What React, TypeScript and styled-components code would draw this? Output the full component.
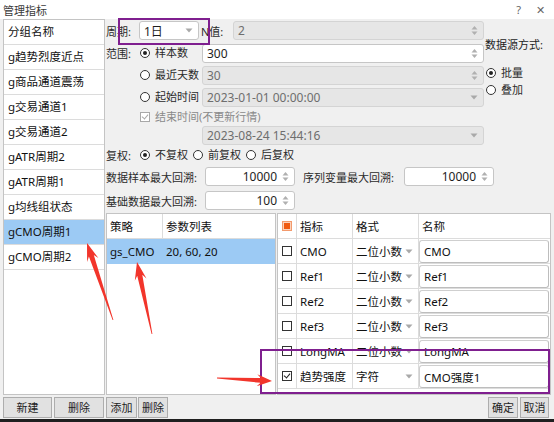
import styled, { createGlobalStyle } from 'styled-components'

const GlobalStyle = createGlobalStyle`
  html, body { margin: 0; padding: 0; background: #f0f0f0; }
  body {
    font-family: "Noto Sans", "Noto Sans CJK SC", sans-serif;
    font-size: 11px;
    color: #1e1e1e;
  }
  * { box-sizing: border-box; }
`

type Point = [number, number]

// long wedge arrow used for the red annotations
function arrowPoints(tail: Point, tip: Point, head = 16, barb = 6, shaft = 2.6): string {
  const dx = tip[0] - tail[0]
  const dy = tip[1] - tail[1]
  const len = Math.hypot(dx, dy)
  const ux = dx / len
  const uy = dy / len
  const nx = -uy
  const ny = ux
  const bx = tip[0] - ux * head * 0.75
  const by = tip[1] - uy * head * 0.75
  const hx = tip[0] - ux * head
  const hy = tip[1] - uy * head
  const pts: Point[] = [
    [tail[0] + nx * 0.4, tail[1] + ny * 0.4],
    [bx + nx * shaft, by + ny * shaft],
    [hx + nx * barb, hy + ny * barb],
    tip,
    [hx - nx * barb, hy - ny * barb],
    [bx - nx * shaft, by - ny * shaft],
    [tail[0] - nx * 0.4, tail[1] - ny * 0.4],
  ]
  return pts.map(p => `${p[0].toFixed(1)},${p[1].toFixed(1)}`).join(' ')
}

const groups = [
  'g趋势烈度近点',
  'g商品通道震荡',
  'g交易通道1',
  'g交易通道2',
  'gATR周期2',
  'gATR周期1',
  'g均线组状态',
  'gCMO周期1',
  'gCMO周期2',
]

type Indicator = { key: string; format: string; name: string; checked: boolean }

const indicators: Indicator[] = [
  { key: 'CMO', format: '二位小数', name: 'CMO', checked: false },
  { key: 'Ref1', format: '二位小数', name: 'Ref1', checked: false },
  { key: 'Ref2', format: '二位小数', name: 'Ref2', checked: false },
  { key: 'Ref3', format: '二位小数', name: 'Ref3', checked: false },
  { key: 'LongMA', format: '二位小数', name: 'LongMA', checked: false },
  { key: '趋势强度', format: '字符', name: 'CMO强度1', checked: true },
]

function DownArrow() {
  return (
    <svg width="8" height="5" viewBox="0 0 8 5">
      <path d="M0.5 0.5 L7.5 0.5 L4 4.5 Z" fill="#a9a9a9" />
    </svg>
  )
}

function SpinArrows() {
  return (
    <svg width="7" height="11" viewBox="0 0 7 11">
      <path d="M0.5 4.5 L6.5 4.5 L3.5 1 Z" fill="#b0b0b0" />
      <path d="M0.5 6.5 L6.5 6.5 L3.5 10 Z" fill="#b0b0b0" />
    </svg>
  )
}

export default function App() {
  return (
    <>
      <GlobalStyle />
      <Window>
        <TitleBar>
          <span>管理指标</span>
          <TitleButtons>
            <span>?</span>
            <span>✕</span>
          </TitleButtons>
        </TitleBar>

        <Body>
          <GroupList>
            <GroupItem>分组名称</GroupItem>
            {groups.map(g => (
              <GroupItem key={g} $selected={g === 'gCMO周期1'}>{g}</GroupItem>
            ))}
          </GroupList>

          <Form>
            <TopBlock>
              <Fields>
                <Row $h={23}>
                  <Label $w={33}>周期:</Label>
                  <Box $w={60}>
                    <span>1日</span>
                    <DownArrow />
                  </Box>
                  <Label $w={32} style={{ marginLeft: 2 }}>N值:</Label>
                  <Box $disabled $grow>
                    <span>2</span>
                    <SpinArrows />
                  </Box>
                </Row>
                <Row $h={22}>
                  <Label $w={33}>范围:</Label>
                  <Option $w={63}><Radio $checked />样本数</Option>
                  <Box $grow>
                    <span>300</span>
                    <SpinArrows />
                  </Box>
                </Row>
                <Row $h={22}>
                  <Label $w={33} />
                  <Option $w={63}><Radio />最近天数</Option>
                  <Box $disabled $grow>
                    <span>30</span>
                    <SpinArrows />
                  </Box>
                </Row>
                <Row $h={22}>
                  <Label $w={33} />
                  <Option $w={63}><Radio />起始时间</Option>
                  <Box $disabled $grow>
                    <span>2023-01-01 00:00:00</span>
                    <DownArrow />
                  </Box>
                </Row>
                <Row $h={17}>
                  <Label $w={33} />
                  <Option $w={200} $muted><Check $checked $muted />结束时间(不更新行情)</Option>
                </Row>
                <Row $h={20}>
                  <Label $w={96} />
                  <Box $disabled $grow>
                    <span>2023-08-24 15:44:16</span>
                    <DownArrow />
                  </Box>
                </Row>
              </Fields>
              <SourcePanel>
                <SourceTitle>数据源方式:</SourceTitle>
                <Option $w={60}><Radio $checked />批量</Option>
                <Option $w={60}><Radio />叠加</Option>
              </SourcePanel>
            </TopBlock>

            <Row $h={20}>
              <Label $w={33}>复权:</Label>
              <RadioGroup>
                <Option><Radio $checked />不复权</Option>
                <Option><Radio />前复权</Option>
                <Option><Radio />后复权</Option>
              </RadioGroup>
            </Row>
            <Row $h={23}>
              <Label $w={99}>数据样本最大回溯:</Label>
              <Box $w={90} $right>
                <span>10000</span>
                <SpinArrows />
              </Box>
              <Label $w={101} style={{ marginLeft: 8 }}>序列变量最大回溯:</Label>
              <Box $w={90} $right>
                <span>10000</span>
                <SpinArrows />
              </Box>
            </Row>
            <Row $h={25}>
              <Label $w={99}>基础数据最大回溯:</Label>
              <Box $w={90} $right>
                <span>100</span>
                <SpinArrows />
              </Box>
            </Row>
          </Form>

          <StrategyTable>
            <StrategyRow>
              <Cell>策略</Cell>
              <Cell $last>参数列表</Cell>
            </StrategyRow>
            <StrategyRow $selected>
              <Cell $plain>gs_CMO</Cell>
              <Cell $plain $last>20, 60, 20</Cell>
            </StrategyRow>
          </StrategyTable>

          <IndicatorTable>
            <IndRow>
              <Cell $center><TriCheck><span /></TriCheck></Cell>
              <Cell>指标</Cell>
              <Cell>格式</Cell>
              <Cell $last>名称</Cell>
            </IndRow>
            {indicators.map(item => (
              <IndRow key={item.key}>
                <Cell $center><Check $checked={item.checked} /></Cell>
                <Cell>{item.key}</Cell>
                <Cell $spread>
                  <span>{item.format}</span>
                  <DownArrow />
                </Cell>
                <Cell $last $tight>
                  <NameInput>{item.name}</NameInput>
                </Cell>
              </IndRow>
            ))}
          </IndicatorTable>

          <ButtonGroup>
            <Button $w={49}>新建</Button>
            <Button $w={50}>删除</Button>
          </ButtonGroup>
          <ButtonGroup $gap={1}>
            <Button $w={31}>添加</Button>
            <Button $w={30}>删除</Button>
          </ButtonGroup>
          <ButtonGroup $end>
            <Button $w={30}>确定</Button>
            <Button $w={29}>取消</Button>
          </ButtonGroup>
        </Body>

        <Annotations width="554" height="422" viewBox="0 0 554 422">
          <rect x="119" y="19" width="90" height="25" fill="none" stroke="#7f1f8f" strokeWidth="2" />
          <rect x="261" y="350" width="288" height="43" fill="none" stroke="#7f1f8f" strokeWidth="2" />
          <polygon points={arrowPoints([113, 320], [87, 243], 18, 6, 2.6)} fill="#f2352b" />
          <polygon points={arrowPoints([152, 334], [137, 262], 18, 6, 2.6)} fill="#f2352b" />
          <polygon points={arrowPoints([217, 378], [272, 381], 15, 6, 2.4)} fill="#f2352b" />
        </Annotations>
      </Window>
    </>
  )
}

const Window = styled.div`
  position: relative;
  width: 554px;
  height: 422px;
  display: flex;
  flex-direction: column;
  background: #f0f0f0;
  border-bottom: 3px solid #1f1f1f;
  overflow: hidden;
`

const TitleBar = styled.div`
  height: 19px;
  flex: none;
  display: flex;
  align-items: center;
  justify-content: space-between;
  padding: 0 9px 0 3px;
  background: #ffffff;
  color: #3a3a3a;
  font-size: 11px;
`

const TitleButtons = styled.div`
  display: flex;
  gap: 15px;
  color: #666;
  font-size: 11px;
`

const Body = styled.div`
  flex: 1;
  display: grid;
  grid-template-columns: 102px 170px 1fr;
  grid-template-rows: 194px 1fr 24px;
  column-gap: 1px;
  padding: 0 3px;
`

const GroupList = styled.div`
  grid-column: 1;
  grid-row: 1 / span 2;
  display: flex;
  flex-direction: column;
  background: #ffffff;
  border: 1px solid #c4c4c4;
`

const GroupItem = styled.div<{ $selected?: boolean }>`
  height: 25px;
  flex: none;
  line-height: 24px;
  padding-left: 4px;
  border-bottom: 1px solid #dcdcdc;
  white-space: nowrap;
  font-size: 11.5px;
  color: #111;
  background: ${({ $selected }) => ($selected ? '#9ccaf4' : '#ffffff')};
`

const Form = styled.div`
  grid-column: 2 / span 2;
  grid-row: 1;
  display: flex;
  flex-direction: column;
`

const TopBlock = styled.div`
  display: flex;
`

const Fields = styled.div`
  width: 378px;
  flex: none;
  display: flex;
  flex-direction: column;
`

const SourcePanel = styled.div`
  display: flex;
  flex-direction: column;
  padding: 18px 0 0 1px;
  gap: 1px;
  white-space: nowrap;
`

const SourceTitle = styled.div`
  line-height: 16px;
  margin-bottom: 11px;
  margin-left: 0;
`

const Row = styled.div<{ $h: number }>`
  height: ${({ $h }) => $h}px;
  flex: none;
  display: flex;
  align-items: center;
  white-space: nowrap;
`

const Label = styled.span<{ $w: number }>`
  width: ${({ $w }) => $w}px;
  flex: none;
  color: #2a2a2a;
`

const Option = styled.span<{ $w?: number; $muted?: boolean }>`
  ${({ $w }) => ($w ? `width: ${$w}px;` : '')}
  flex: none;
  display: flex;
  align-items: center;
  gap: 5px;
  padding-left: 1px;
  line-height: 16px;
  color: ${({ $muted }) => ($muted ? '#8a8a8a' : '#2a2a2a')};
`

const RadioGroup = styled.div`
  display: flex;
  gap: 4px;
`

const Radio = styled.span<{ $checked?: boolean }>`
  width: 10px;
  height: 10px;
  flex: none;
  border: 1px solid #333;
  border-radius: 50%;
  background: #fff;
  position: relative;
  &::after {
    content: '';
    display: ${({ $checked }) => ($checked ? 'block' : 'none')};
    position: absolute;
    left: 2px;
    top: 2px;
    width: 4px;
    height: 4px;
    border-radius: 50%;
    background: #222;
  }
`

const Check = styled.span<{ $checked?: boolean; $muted?: boolean }>`
  width: 10px;
  height: 10px;
  flex: none;
  border: 1px solid ${({ $muted }) => ($muted ? '#a8a8a8' : '#333')};
  background: #fff;
  position: relative;
  &::after {
    content: '';
    display: ${({ $checked }) => ($checked ? 'block' : 'none')};
    position: absolute;
    left: 2px;
    top: 0px;
    width: 3px;
    height: 5px;
    border: solid ${({ $muted }) => ($muted ? '#a8a8a8' : '#222')};
    border-width: 0 1.5px 1.5px 0;
    transform: rotate(40deg);
  }
`

const TriCheck = styled.span`
  width: 10px;
  height: 10px;
  border: 1px solid #f39a6c;
  background: #fbd2bb;
  display: flex;
  align-items: center;
  justify-content: center;
  span {
    width: 6px;
    height: 6px;
    background: #f05a10;
  }
`

const Box = styled.div<{ $w?: number; $grow?: boolean; $disabled?: boolean; $right?: boolean }>`
  ${({ $w }) => ($w ? `width: ${$w}px;` : '')}
  ${({ $grow }) => ($grow ? 'flex: 1;' : 'flex: none;')}
  height: 19px;
  display: flex;
  align-items: center;
  justify-content: ${({ $right }) => ($right ? 'flex-end' : 'space-between')};
  gap: 5px;
  padding: 0 5px 0 4px;
  border: 1px solid ${({ $disabled }) => ($disabled ? '#d4d4d4' : '#c6c6c6')};
  border-radius: 3px;
  background: ${({ $disabled }) => ($disabled ? '#e6e6e6' : '#ffffff')};
  color: ${({ $disabled }) => ($disabled ? '#6e6e6e' : '#1e1e1e')};
  font-size: 12px;
  svg { flex: none; }
`

const StrategyTable = styled.div`
  grid-column: 2;
  grid-row: 2;
  display: flex;
  flex-direction: column;
  background: #ffffff;
  border: 1px solid #c4c4c4;
`

const StrategyRow = styled.div<{ $selected?: boolean }>`
  height: 25px;
  flex: none;
  display: grid;
  grid-template-columns: 56px 1fr;
  border-bottom: 1px solid ${({ $selected }) => ($selected ? '#9ccaf4' : '#dcdcdc')};
  background: ${({ $selected }) => ($selected ? '#9ccaf4' : '#ffffff')};
`

const Cell = styled.div<{ $last?: boolean; $plain?: boolean; $center?: boolean; $spread?: boolean; $tight?: boolean }>`
  display: flex;
  align-items: center;
  justify-content: ${({ $center, $spread }) => ($center ? 'center' : $spread ? 'space-between' : 'flex-start')};
  padding: ${({ $tight, $spread }) => ($tight ? '1px 1px 0 0' : $spread ? '0 5px 0 3px' : '0 3px')};
  white-space: nowrap;
  font-size: 11.5px;
  color: #111;
  border-right: ${({ $last, $plain }) => ($last || $plain ? 'none' : '1px solid #dcdcdc')};
`

const IndicatorTable = styled.div`
  grid-column: 3;
  grid-row: 2;
  display: flex;
  flex-direction: column;
  background: #ffffff;
  border: 1px solid #c4c4c4;
  overflow: hidden;
`

const IndRow = styled.div`
  height: 25px;
  flex: none;
  display: grid;
  grid-template-columns: 19px 56px 66px 1fr;
  border-bottom: 1px solid #dcdcdc;
`

const NameInput = styled.div`
  flex: 1;
  height: 23px;
  display: flex;
  align-items: center;
  padding-left: 4px;
  border: 1px solid #cfcfcf;
  border-right-color: #bdbdbd;
  border-bottom-color: #bdbdbd;
  border-radius: 3px;
  background: #ffffff;
`

const ButtonGroup = styled.div<{ $gap?: number; $end?: boolean }>`
  grid-row: 3;
  display: flex;
  align-items: center;
  gap: ${({ $gap }) => $gap ?? 2}px;
  justify-content: ${({ $end }) => ($end ? 'flex-end' : 'flex-start')};
  padding-right: ${({ $end }) => ($end ? 2 : 0)}px;
`

const Button = styled.button<{ $w: number }>`
  width: ${({ $w }) => $w}px;
  height: 21px;
  padding: 0;
  border: 1px solid #adadad;
  background: #e1e1e1;
  font-family: inherit;
  font-size: 11px;
  color: #1e1e1e;
`

const Annotations = styled.svg`
  position: absolute;
  left: 0;
  top: 0;
  pointer-events: none;
`
